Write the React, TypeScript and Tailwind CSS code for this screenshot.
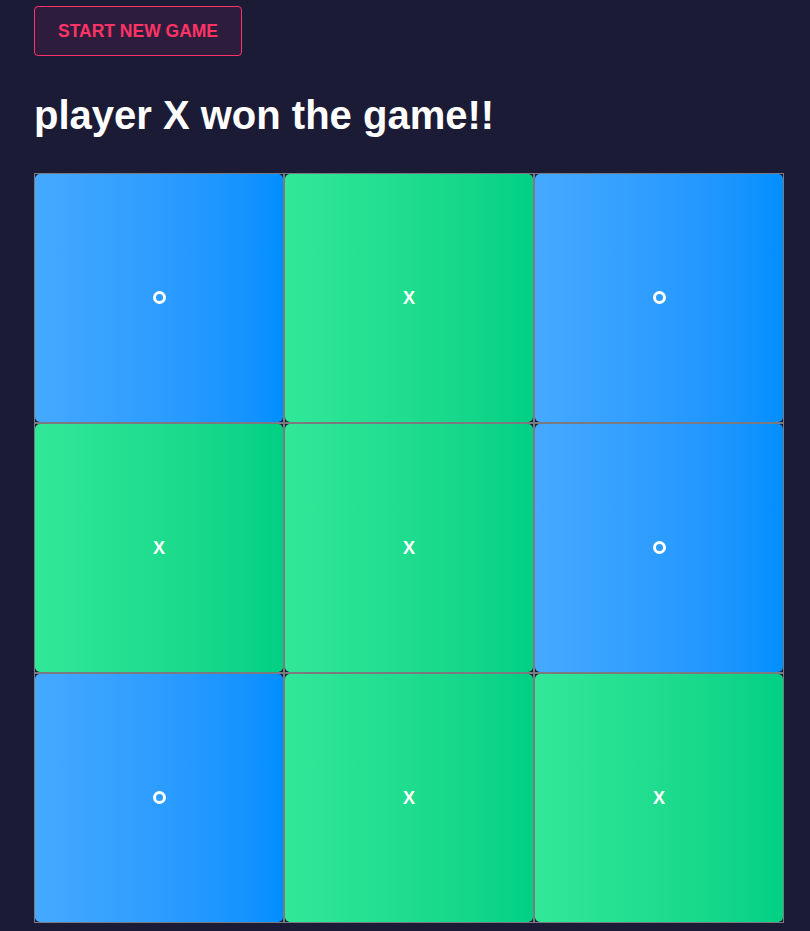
const board = ["O", "X", "O", "X", "X", "O", "O", "X", "X"];

function Cell({ value }: { value: string }) {
  const isX = value === "X";
  return (
    <div className="border border-[#7a7a80]">
      <div
        className={
          isX
            ? "flex h-[248px] items-center justify-center rounded-[5px] bg-gradient-to-r from-[#30e898] to-[#00d084]"
            : "flex h-[248px] items-center justify-center rounded-[5px] bg-gradient-to-r from-[#45a9ff] to-[#008fff]"
        }
      >
        {isX ? (
          <span className="text-[18px] font-bold leading-none text-white">X</span>
        ) : (
          <span className="-mt-[2px] block h-[13px] w-[13px] rounded-full border-[3px] border-white" />
        )}
      </div>
    </div>
  );
}

export default function App() {
  return (
    <div className="min-h-[931px] bg-[#1c1b36] px-[34px] pt-[6px] font-['Liberation_Sans',Arial,sans-serif]">
      <button className="h-[50px] w-[208px] rounded-[4px] border border-[#ff3366] bg-[#2e1c3d] text-[17.5px] font-bold text-[#ff3366]">
        START NEW GAME
      </button>
      <h1 className="mt-[36px] text-[40px] font-bold leading-[46px] text-white">
        player X won the game!!
      </h1>
      <div className="mt-[35px] grid w-[750px] grid-cols-3">
        {board.map((v, i) => (
          <Cell key={i} value={v} />
        ))}
      </div>
    </div>
  );
}
